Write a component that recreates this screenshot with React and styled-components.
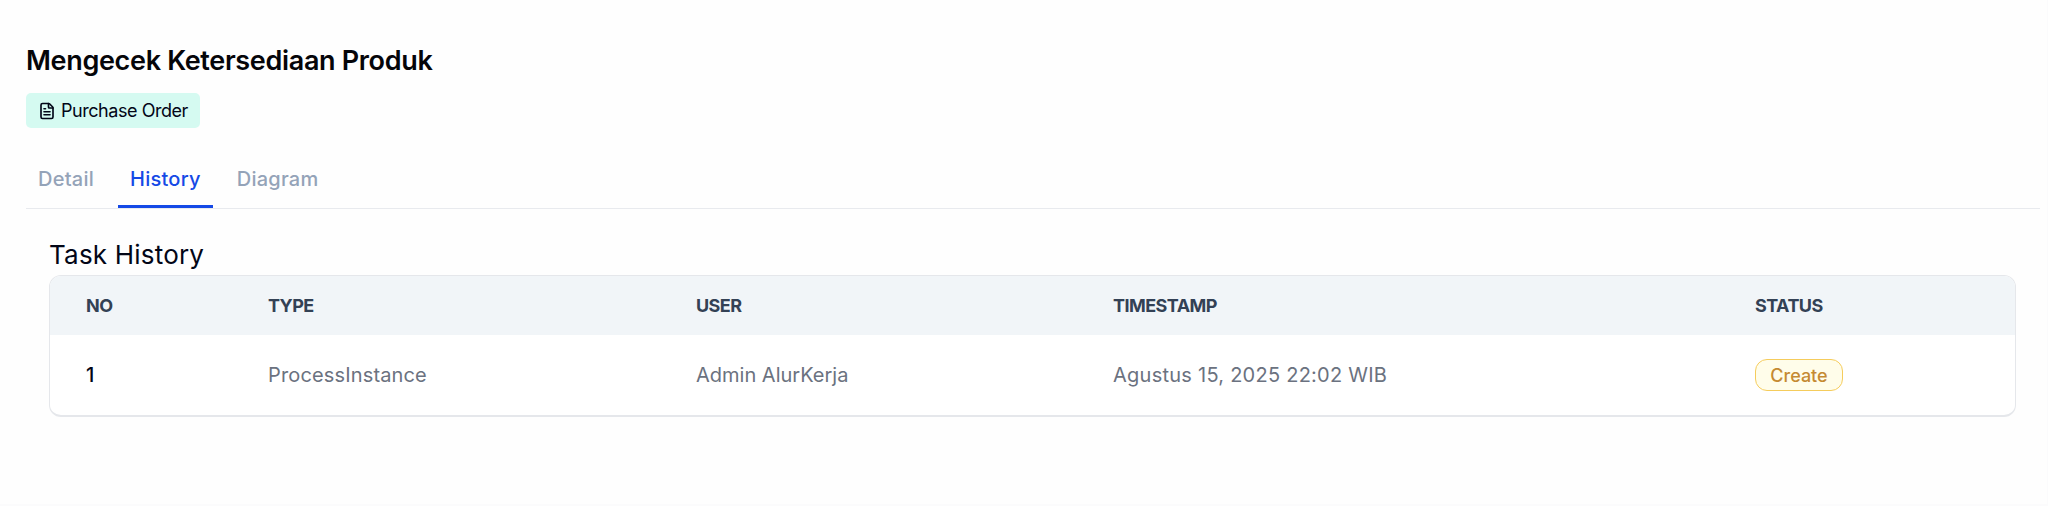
import React, { useState } from 'react';
import styled, { createGlobalStyle } from 'styled-components';
import { FileText } from 'lucide-react';

const tabs = ['Detail', 'History', 'Diagram'];

const columns = [
    { label: 'No', width: '182px' },
    { label: 'Type', width: '428px' },
    { label: 'User', width: '417px' },
    { label: 'Timestamp', width: '642px' },
    { label: 'Status', width: 'auto' },
];

const history = [
    {
        type: 'ProcessInstance',
        user: 'Admin AlurKerja',
        timestamp: 'Agustus 15, 2025 22:02 WIB',
        status: 'Create',
    },
];

function App() {
    const [active, setActive] = useState('History');

    return (
        <>
            <GlobalStyle />
            <Page>
                <Title>Mengecek Ketersediaan Produk</Title>
                <ProcessTag>
                    <FileText size={18} strokeWidth={2.2} />
                    <span>Purchase Order</span>
                </ProcessTag>
                <TabList>
                    {tabs.map((tab) => (
                        <Tab key={tab} $active={tab === active} onClick={() => setActive(tab)}>
                            {tab}
                        </Tab>
                    ))}
                </TabList>
                <Panel>
                    <SectionTitle>Task History</SectionTitle>
                    <TableCard>
                        <Table>
                            <thead>
                                <tr>
                                    {columns.map((col) => (
                                        <HeadCell key={col.label} $width={col.width}>
                                            {col.label}
                                        </HeadCell>
                                    ))}
                                </tr>
                            </thead>
                            <tbody>
                                {history.map((item, index) => (
                                    <tr key={item.timestamp}>
                                        <Cell $strong>{index + 1}</Cell>
                                        <Cell $spacing="0.15px">{item.type}</Cell>
                                        <Cell>{item.user}</Cell>
                                        <Cell $spacing="0.25px">{item.timestamp}</Cell>
                                        <Cell>
                                            <Status>{item.status}</Status>
                                        </Cell>
                                    </tr>
                                ))}
                            </tbody>
                        </Table>
                    </TableCard>
                </Panel>
            </Page>
        </>
    );
}

const GlobalStyle = createGlobalStyle`
    * {
        box-sizing: border-box;
    }

    body {
        margin: 0;
        background: #fefefe;
        color: #020617;
        font-family: Inter, 'Liberation Sans', sans-serif;
    }
`;

const Page = styled.main`
    height: 506px;
    padding: 43px 7px 0 26px;
    border: solid #fbfbfc;
    border-width: 0 1px 2px 0;
`;

const Title = styled.h1`
    margin: 0;
    font-size: 27px;
    line-height: 36px;
    font-weight: 600;
    letter-spacing: -0.33px;
    color: #050509;
`;

const ProcessTag = styled.div`
    display: flex;
    align-items: center;
    gap: 5px;
    width: 174px;
    height: 35px;
    margin-top: 14px;
    padding-left: 12px;
    border-radius: 5px;
    background: #d5faf1;
    font-size: 18px;
    letter-spacing: -0.45px;
    white-space: nowrap;

    svg {
        flex-shrink: 0;
    }
`;

const TabList = styled.div`
    display: flex;
    gap: 12px;
    height: 59px;
    margin-top: 22px;
    border-bottom: 1px solid #e8eaee;
`;

const Tab = styled.button`
    height: 58px;
    padding: 2px 12px 0;
    border: 0;
    border-bottom: 3px solid ${({ $active }) => ($active ? '#1549e6' : 'transparent')};
    background: none;
    color: ${({ $active }) => ($active ? '#1549e6' : '#94a3b8')};
    font-family: inherit;
    font-size: 20px;
    font-weight: 500;
    letter-spacing: 0.25px;
    cursor: pointer;
`;

const Panel = styled.section`
    padding: 28px 24px 0 23px;
`;

const SectionTitle = styled.h2`
    margin: 0 0 2px;
    font-size: 26px;
    line-height: 36px;
    font-weight: 400;
    letter-spacing: 0.2px;
`;

const TableCard = styled.div`
    overflow: hidden;
    height: 142px;
    border: 1px solid #e5e7eb;
    border-bottom-width: 2px;
    border-radius: 12px;
    background: #fff;
`;

const Table = styled.table`
    width: 100%;
    table-layout: fixed;
    border-collapse: collapse;
    text-align: left;
`;

const HeadCell = styled.th`
    width: ${({ $width }) => $width};
    height: 59px;
    padding: 0 0 1px 36px;
    background: #f1f5f8;
    color: #334155;
    font-size: 18px;
    font-weight: 700;
    letter-spacing: -0.55px;
    text-transform: uppercase;
`;

const Cell = styled.td`
    height: 80px;
    padding: 0 0 0 36px;
    color: ${({ $strong }) => ($strong ? '#020617' : '#6b7280')};
    font-size: 20px;
    font-weight: ${({ $strong }) => ($strong ? 500 : 400)};
    letter-spacing: ${({ $spacing }) => $spacing || '0'};
`;

const Status = styled.span`
    display: flex;
    align-items: center;
    justify-content: center;
    width: 88px;
    height: 32px;
    border: 1px solid #f5cc5c;
    border-radius: 12px;
    background: #fffdea;
    color: #c58a32;
    font-size: 18px;
    font-weight: 500;
`;

export default App;
